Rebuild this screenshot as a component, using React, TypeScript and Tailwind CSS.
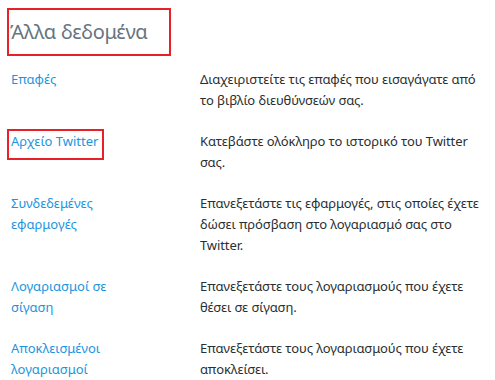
import React from "react";

const rows: { link: React.ReactNode; desc: React.ReactNode; boxed?: boolean }[] = [
  {
    link: <>Επαφές</>,
    desc: (
      <>
        Διαχειριστείτε τις επαφές που εισαγάγατε από
        <br />
        το βιβλίο διευθύνσεών σας.
      </>
    ),
  },
  {
    link: <>Αρχείο Twitter</>,
    boxed: true,
    desc: (
      <>
        Κατεβάστε ολόκληρο το ιστορικό του Twitter
        <br />
        σας.
      </>
    ),
  },
  {
    link: (
      <>
        Συνδεδεμένες
        <br />
        εφαρμογές
      </>
    ),
    desc: (
      <>
        Επανεξετάστε τις εφαρμογές, στις οποίες έχετε
        <br />
        δώσει πρόσβαση στο λογαριασμό σας στο
        <br />
        Twitter.
      </>
    ),
  },
  {
    link: (
      <>
        Λογαριασμοί σε
        <br />
        σίγαση
      </>
    ),
    desc: (
      <>
        Επανεξετάστε τους λογαριασμούς που έχετε
        <br />
        θέσει σε σίγαση.
      </>
    ),
  },
  {
    link: (
      <>
        Αποκλεισμένοι
        <br />
        λογαριασμοί
      </>
    ),
    desc: (
      <>
        Επανεξετάστε τους λογαριασμούς που έχετε
        <br />
        αποκλείσει.
      </>
    ),
  },
];

export default function App() {
  return (
    <div
      className="w-[495px] h-[380px] overflow-hidden bg-white pt-[8px] pl-[7px]"
      style={{ fontFamily: '"Noto Sans", "Open Sans", sans-serif' }}
    >
      <div className="w-[164px] h-[48px] border-2 border-[#e8202a] flex items-center pl-[1px]">
        <span className="text-[20px] leading-none text-[#66757f] whitespace-nowrap tracking-[-0.3px]">
          Άλλα δεδομένα
        </span>
      </div>
      <div className="mt-[13px] pl-[4px] flex flex-col gap-[20px] text-[13px] leading-[21px]">
        {rows.map((r, i) => (
          <div key={i} className="flex">
            <div className="w-[189px] shrink-0 text-[#1b95e0] whitespace-nowrap">
              {r.boxed ? (
                <span className="relative inline-block">
                  {r.link}
                  <span className="absolute -left-[4px] -right-[6px] -top-[2px] -bottom-[8px] border-2 border-[#e8202a]" />
                </span>
              ) : (
                r.link
              )}
            </div>
            <div className="text-[#292f33] whitespace-nowrap tracking-[-0.1px]">{r.desc}</div>
          </div>
        ))}
      </div>
    </div>
  );
}
